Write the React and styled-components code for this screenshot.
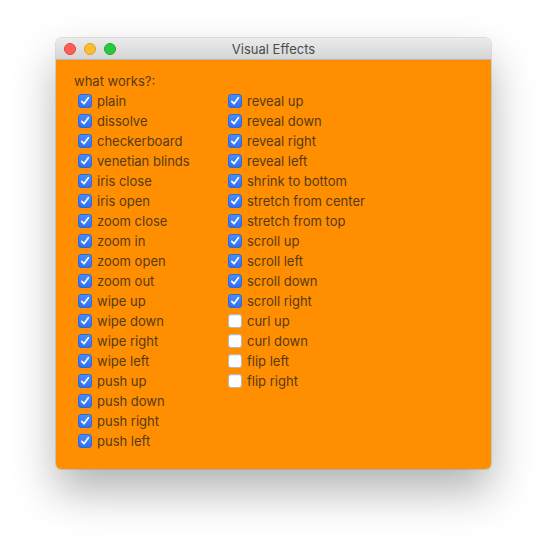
import styled, { createGlobalStyle } from "styled-components";

const GlobalStyle = createGlobalStyle`
  html, body {
    margin: 0;
    background: #ffffff;
  }
  body {
    font-family: Inter, "Liberation Sans", Arial, sans-serif;
  }
`;

const Desk = styled.div`
  width: 547px;
  height: 544px;
  padding: 38px 0 0 56px;
  box-sizing: border-box;
`;

const Window = styled.div`
  width: 435px;
  height: 431px;
  border-radius: 5px;
  overflow: hidden;
  display: flex;
  flex-direction: column;
  box-shadow: 0 0 0 0.5px rgba(0, 0, 0, 0.22), 0 22px 44px rgba(0, 0, 0, 0.3);
`;

const TitleBar = styled.div`
  height: 21px;
  flex-shrink: 0;
  position: relative;
  display: flex;
  align-items: center;
  justify-content: center;
  background: linear-gradient(#ebebeb, #d5d5d5);
  border-bottom: 1px solid #b8b8b8;
`;

const Lights = styled.div`
  position: absolute;
  left: 8px;
  top: 5px;
  display: flex;
  gap: 8px;
`;

const Light = styled.span`
  width: 12px;
  height: 12px;
  border-radius: 50%;
  box-sizing: border-box;
  background: ${(p) => p.color};
  border: 0.5px solid ${(p) => p.edge};
`;

const Title = styled.div`
  font-size: 13px;
  color: #4c4c4c;
`;

const Content = styled.div`
  flex: 1;
  background: #ff8f00;
  padding: 11px 18px 0;
  color: #573a14;
  font-size: 13px;
`;

const Heading = styled.div`
  line-height: 20px;
`;

const Columns = styled.div`
  display: flex;
`;

const Column = styled.div`
  width: 150px;
  display: flex;
  flex-direction: column;
`;

const Row = styled.label`
  height: 20px;
  display: flex;
  align-items: center;
  padding-left: 4px;
  gap: 5px;
  white-space: nowrap;
`;

const Box = styled.span`
  width: 14px;
  height: 14px;
  box-sizing: border-box;
  border-radius: 3px;
  display: flex;
  align-items: center;
  justify-content: center;
  flex-shrink: 0;
  background: ${(p) => (p.$checked ? "linear-gradient(#4b8cf8, #2f6ff3)" : "#ffffff")};
  border: 0.5px solid ${(p) => (p.$checked ? "#2d68e0" : "#b9b9b9")};
  box-shadow: ${(p) => (p.$checked ? "none" : "inset 0 1px 1px rgba(0,0,0,0.08)")};
`;

const Check = () => (
  <svg width="10" height="10" viewBox="0 0 10 10">
    <path
      d="M1.8 5.4 L4 7.8 L8.4 1.8"
      fill="none"
      stroke="#ffffff"
      strokeWidth="1.7"
      strokeLinecap="round"
      strokeLinejoin="round"
    />
  </svg>
);

const left = [
  "plain",
  "dissolve",
  "checkerboard",
  "venetian blinds",
  "iris close",
  "iris open",
  "zoom close",
  "zoom in",
  "zoom open",
  "zoom out",
  "wipe up",
  "wipe down",
  "wipe right",
  "wipe left",
  "push up",
  "push down",
  "push right",
  "push left",
].map((name) => ({ name, on: true }));

const right = [
  ["reveal up", true],
  ["reveal down", true],
  ["reveal right", true],
  ["reveal left", true],
  ["shrink to bottom", true],
  ["stretch from center", true],
  ["stretch from top", true],
  ["scroll up", true],
  ["scroll left", true],
  ["scroll down", true],
  ["scroll right", true],
  ["curl up", false],
  ["curl down", false],
  ["flip left", false],
  ["flip right", false],
].map(([name, on]) => ({ name, on }));

const Item = ({ name, on }) => (
  <Row>
    <Box $checked={on}>{on && <Check />}</Box>
    <span>{name}</span>
  </Row>
);

export default function App() {
  return (
    <>
      <GlobalStyle />
      <Desk>
        <Window>
          <TitleBar>
            <Lights>
              <Light color="#ff5f57" edge="#e0443e" />
              <Light color="#febc2e" edge="#dea123" />
              <Light color="#28c840" edge="#1aab29" />
            </Lights>
            <Title>Visual Effects</Title>
          </TitleBar>
          <Content>
            <Heading>what works?:</Heading>
            <Columns>
              <Column>
                {left.map((it) => (
                  <Item key={it.name} {...it} />
                ))}
              </Column>
              <Column>
                {right.map((it) => (
                  <Item key={it.name} {...it} />
                ))}
              </Column>
            </Columns>
          </Content>
        </Window>
      </Desk>
    </>
  );
}
